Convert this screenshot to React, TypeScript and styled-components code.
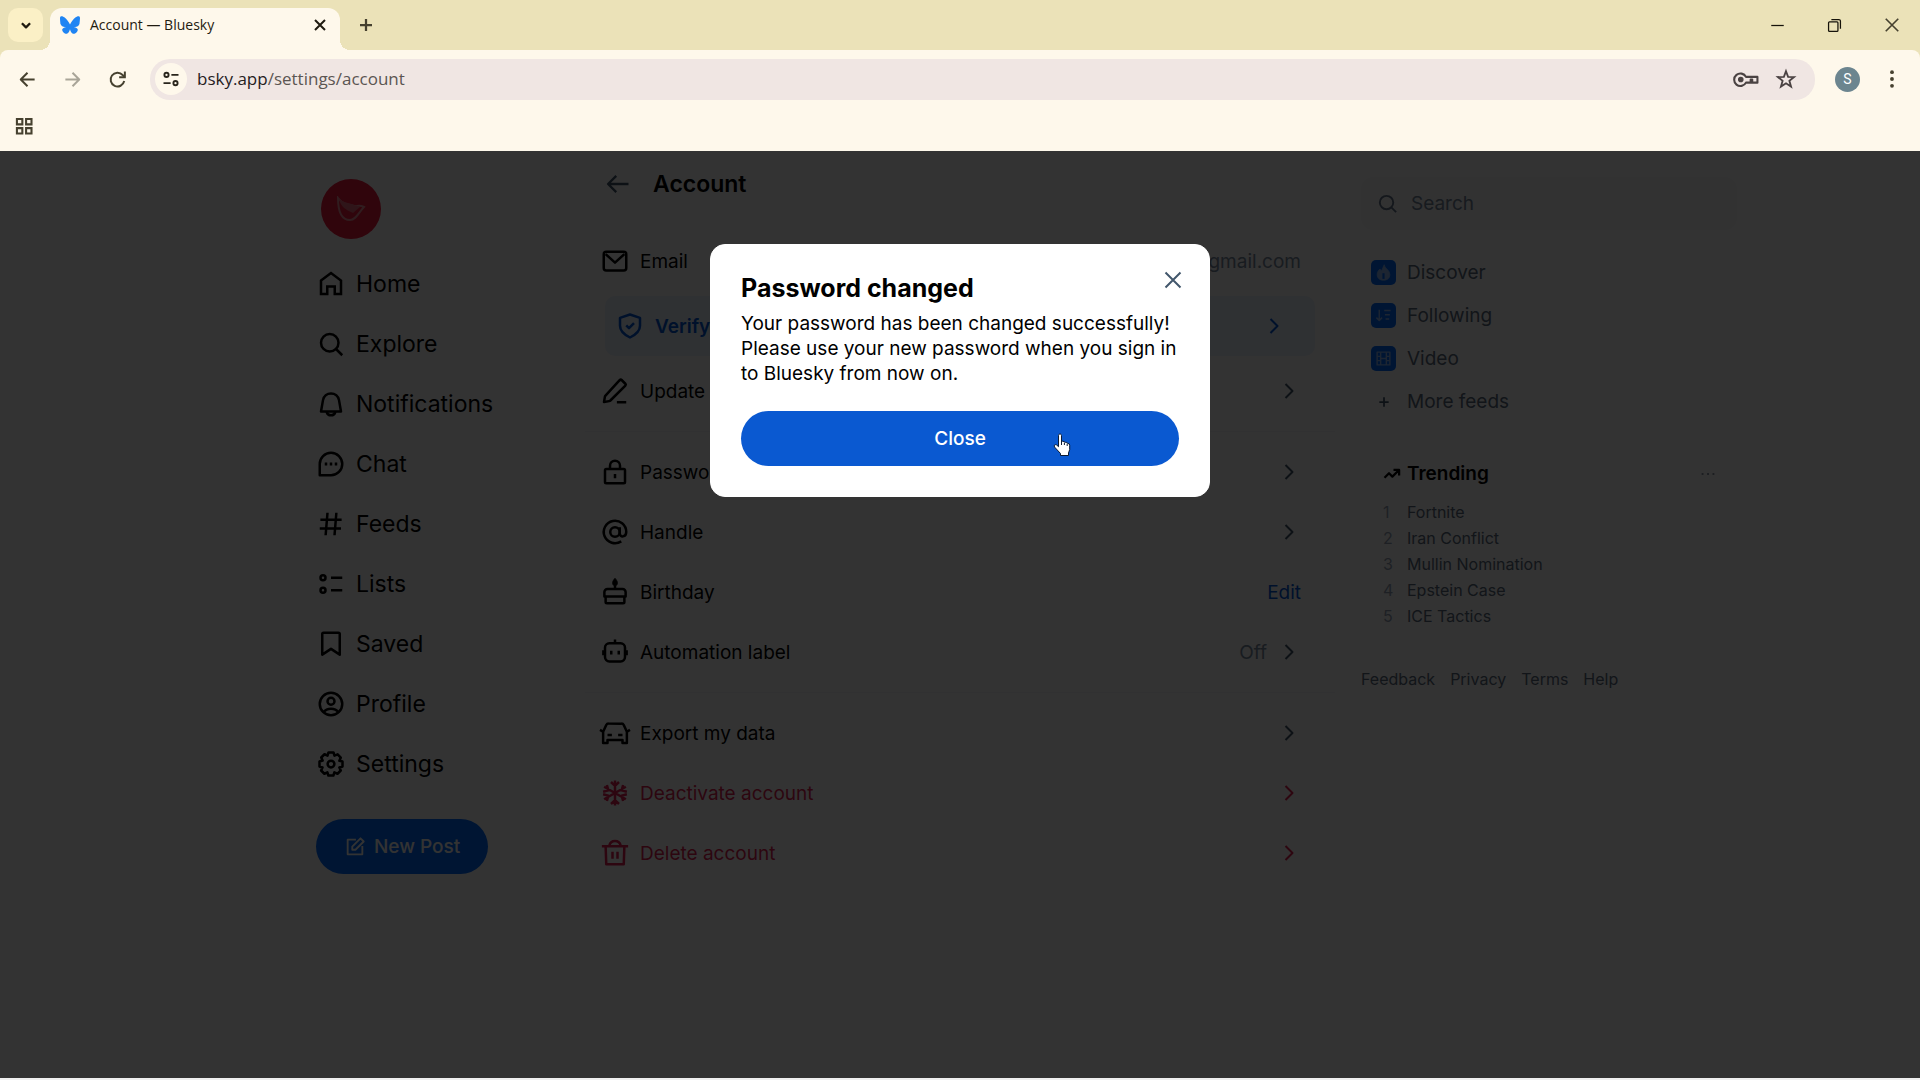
import React from 'react';
import styled, { createGlobalStyle } from 'styled-components';

const GlobalStyle = createGlobalStyle`
  * { box-sizing: border-box; }
  body { margin: 0; background: #f0f0f0; }
  button, input { font: inherit; color: inherit; }
  button { border: 0; padding: 0; background: none; cursor: pointer; }
  a { color: inherit; text-decoration: none; }
  h1, h2, p, ul, ol { margin: 0; padding: 0; }
  ul, ol { list-style: none; }
  svg { display: block; flex: none; }
`;

/* ---------- icons ---------- */

type IconProps = { size?: number; weight?: number; color?: string; children: React.ReactNode };

const Icon = ({ size = 30, weight = 2, color = 'currentColor', children }: IconProps) => (
  <svg width={size} height={size} viewBox="0 0 24 24" fill="none" stroke={color} strokeWidth={weight}
    strokeLinejoin="round" overflow="visible" aria-hidden="true">
    {children}
  </svg>
);

const glyphs: Record<string, React.ReactNode> = {
  home: <path d="M4 9.2 12 3.2l8 6V20h-5v-6H9v6H4Z" strokeLinejoin="miter" />,
  search: <><circle cx="11" cy="11" r="7" /><path d="m16 16 5 5" /></>,
  bell: <><path d="M5.6 8.9a6.5 6.5 0 0 1 12.8 0L20 18H4Z" /><path d="M8.5 18.3a3.6 3.6 0 0 0 7 0" /></>,
  chat: <><path d="M12 3a9 9 0 1 1 0 18H3v-9a9 9 0 0 1 9-9Z" /><path d="M7 12h2M11 12h2M15 12h2" strokeWidth="2.4" /></>,
  hash: <path d="M9.2 3 7.7 21M16.3 3l-1.5 18M3.5 8.5h17M3 15.5h17" />,
  lists: <><circle cx="5.6" cy="7" r="2" /><circle cx="5.6" cy="17" r="2" /><path d="M12 7h9M12 17h9" /></>,
  bookmark: <path d="M5 4a1 1 0 0 1 1-1h12a1 1 0 0 1 1 1v16.5l-7-4.6-7 4.6Z" />,
  profile: <><circle cx="12" cy="12" r="9" /><circle cx="12" cy="9.8" r="2.8" /><path d="M6 18.4c2.8-3.6 9.200-3.600 12 0" /></>,
  settings: <><path d="M10 2.800h4l.8 2.500 2.500-1 2.500 2.600-1.100 2.500L21.200 10v4l-2.500.8 1.100 2.400-2.600 2.600-2.500-1.100-.8 2.500h-4l-.8-2.500-2.400 1.100-2.600-2.600 1.100-2.400L2.800 14v-4l2.500-.8-1.100-2.400 2.600-2.600 2.400 1.100Z" /><circle cx="12" cy="12" r="2.700" /></>,
  compose: <><path d="M13 4H4v16h16v-9" /><path d="M9 15v-3.500L18 2.500l3.500 3.500-9 9Z" /></>,
  back: <path d="M21 12H3.500M10.500 5l-7 7 7 7" />,
  mail: <><rect x="3" y="4.500" width="18" height="15" rx="2" /><path d="m4.500 6.500 7.500 6.800 7.500-6.800" /></>,
  shield: <><path d="M12 2.800 4 5.500v6.300c0 4.700 3.500 7.200 8 9.400 4.500-2.200 8-4.700 8-9.400V5.500Z" /><path d="m9 11.500 2.200 2.200 4-4" /></>,
  pencil: <><path d="m14.800 4.300 1.100-1.100a1 1 0 0 1 1.400 0l3 3a1 1 0 0 1 0 1.400L8.300 19.600a2 2 0 0 1-1 .5l-4.100.7.700-4.100a2 2 0 0 1 .5-1Z" /><path d="M13.500 21h7.500" /></>,
  lock: <><rect x="4" y="9.500" width="16" height="11.500" rx="1" /><path d="M8 9.500V7a4 4 0 0 1 8 0v2.500M12 13.500v3.500" /></>,
  at: <><circle cx="12" cy="12" r="3.800" /><path d="M15.800 8.200V13c0 3.800 5.200 3.200 5.200-1A9 9 0 1 0 17 19.500" /></>,
  cake: <><path d="M3.500 12a2.500 2.500 0 0 1 2.500-2.500h12a2.500 2.500 0 0 1 2.500 2.500v3.500H3.500Z" /><path d="M4.500 15.500V20a1 1 0 0 0 1 1h13a1 1 0 0 0 1-1v-4.500M12 9.500V6.500" /><path d="M12 1c3 3 2.200 6 0 6s-3-3 0-6Z" fill="currentColor" strokeWidth="0.600" /></>,
  bot: <><rect x="4" y="5" width="16" height="14.500" rx="3.500" /><path d="M12 2v3M2.700 10.500v4M21.300 10.500v4M9 11v3M15 11v3" /></>,
  car: <><path d="M2.500 11 5 5.600A2 2 0 0 1 6.800 4.500h10.400A2 2 0 0 1 19 5.600L21.500 11v9H18V17.500H6V20H2.500Z" /><path d="M0 9.500l2.500 1.500M24 9.500l-2.500 1.500M6 13.500h3.500M14.500 13.500H18" /></>,
  snow: <path d="M12 2v20M3.300 7l17.400 10M3.300 17 20.700 7M8.800 3.200 12 6.300l3.200-3.100M8.800 20.800l3.200-3.100 3.200 3.100M2.500 11l4.200-1.100L5.500 5.600M21.500 13l-4.200 1.100 1.200 4.300M2.500 13l4.200 1.100-1.200 4.300M21.500 11l-4.200-1.100 1.200-4.300" />,
  trash: <><path d="M4.500 6.500 5 21h14l.5-14.500M1.500 6.500h21M7.500 6a4.600 4.600 0 0 1 9 0M10 11v5.500M14 11v5.500" /></>,
  chevron: <path d="m8.500 5 7 7-7 7" />,
  close: <path d="m4.500 4.500 15 15M19.500 4.500l-15 15" />,
  plus: <path d="M12 4v16M4 12h16" />,
  trend: <path d="m2 17 6-6 4.500 4.500L21 7M14 6.500h7.500V14" />,
  dots: <path d="M3.500 12h2.500M10.800 12h2.500M18 12h2.500" />,
  chevronDown: <path d="m5 9 7 7 7-7" />,
  arrowLeft: <path d="M21 12H4M12 3.500 3.500 12l8.500 8.500" />,
  arrowRight: <path d="M3 12h17M12 3.500l8.500 8.500-8.500 8.500" />,
  reload: <><path d="M20.500 14A8.700 8.700 0 1 1 18.500 6.300L21 8.800" /><path d="M21.300 2v7.200h-7.200" strokeLinejoin="miter" /></>,
  tune: <><circle cx="6" cy="6.500" r="2.800" /><circle cx="18" cy="17.500" r="2.800" /><path d="M12.500 6.500H22M2 17.500h9.500" /></>,
  grid: <path d="M3.500 3.500h6.500v6.500H3.500ZM14.500 3.500h6.500v6.500h-6.500ZM3.500 14.500h6.500v6.500H3.500ZM14.500 14.500h6.500v6.500h-6.500Z" strokeLinejoin="miter" />,
  star: <path d="m12 3.500 2.300 6.100 6.500.3-5.100 4.100 1.800 6.300L12 16.700l-5.500 3.600L8.300 14 3.200 9.900l6.500-.3Z" strokeLinejoin="miter" />,
  key: <><path d="M11.500 9.500H22.500v5.500h-5v-3h-1.500v3h-4.500a6 6 0 1 1 0-5.500Z" /><circle cx="6.500" cy="12" r="1.700" fill="currentColor" /></>,
  minimise: <path d="M2 12h20" />,
  restore: <><rect x="2.500" y="6" width="15" height="15.500" rx="1.500" /><path d="M7 2.500h12a2.500 2.500 0 0 1 2.500 2.500v12" /></>,
  more: <g fill="currentColor" stroke="none"><circle cx="12" cy="3.800" r="2.300" /><circle cx="12" cy="12" r="2.300" /><circle cx="12" cy="20.200" r="2.300" /></g>,
};

const Butterfly = () => (
  <svg width="20" height="18" viewBox="0 0 568 501" fill="#1f84f3" aria-hidden="true">
    <path d="M123 33.700c65.200 49 135.300 148.200 161 201.400 25.700-53.200 95.800-152.400 161-201.400 47-35.300 123-62.600 123 24.300 0 17.300-10 145.700-15.800 166.500-20.300 72.500-94.200 91-160 79.800 115 19.600 144.200 84.400 81 149.200-120 123.100-172.400-30.900-185.900-70.300-2.500-7.300-3.600-10.700-3.600-7.800 0-2.900-1.200.5-3.600 7.800-13.500 39.400-66 193.400-185.900 70.300-63.200-64.800-33.900-129.600 81-149.200-65.800 11.200-139.700-7.300-160-79.800C10 203.700 0 75.300 0 58 0-28.900 76-1.600 123 33.700Z" />
  </svg>
);

const HandCursor = () => (
  <svg width="18" height="24" viewBox="0 0 18 24" aria-hidden="true">
    <path d="M5.500 2.500C5.500.5 8.500.5 8.500 2.500V9l1-.8 1.900.5.9.6 1.500.2.900.8 1.500.6.500 1.300v4.300L15.500 20v2.500h-8V20.500L1.500 14c-1-1.700.8-3 2.200-2l1.800 1.700Z" fill="#fff" stroke="#0b1a33" strokeWidth="1" />
    <path d="M8.500 9v3M11.400 9.500V12M14.200 10.500V13" stroke="#0b1a33" strokeWidth="1" />
  </svg>
);

/* ---------- browser frame ---------- */

const Window = styled.div`
  min-height: 100vh;
  display: flex;
  flex-direction: column;
  background: #ebe2b8;
  border-bottom: 2px solid #f0f0f0;
`;

const TabStrip = styled.div`
  height: 50px;
  display: flex;
  align-items: flex-end;
  padding-left: 8px;
  color: #1f1b10;
`;

const TabSearch = styled.button`
  width: 35px;
  height: 34px;
  margin: 0 7px 8px 0;
  border-radius: 10px;
  background: #fbf0c6;
  display: grid;
  place-items: center;
`;

const Tab = styled.div`
  position: relative;
  width: 290px;
  height: 42px;
  display: flex;
  align-items: center;
  gap: 10px;
  padding: 0 12px 8px 10px;
  border-radius: 12px 12px 0 0;
  background: #fef8eb;
  &::before, &::after {
    content: '';
    position: absolute;
    bottom: 0;
    width: 10px;
    height: 10px;
    background: radial-gradient(circle at 0 0, transparent 10px, #fef8eb 10px);
  }
  &::before { left: -10px; }
  &::after { right: -10px; transform: scaleX(-1); }
`;

const TabTitle = styled.span`
  flex: 1;
  font: 14px/20px 'Open Sans', 'Noto Sans', sans-serif;
`;

const ChromeButton = styled.button<{ $w?: number; $color?: string }>`
  width: ${p => p.$w ?? 30}px;
  height: 34px;
  display: grid;
  place-items: center;
  color: ${p => p.$color ?? '#46412f'};
`;

const NewTab = styled(ChromeButton)`
  margin: 0 auto 8px 11px;
`;

const WindowControls = styled.div`
  display: flex;
  align-items: center;
  height: 50px;
`;

const Toolbar = styled.div`
  height: 58px;
  display: flex;
  align-items: center;
  padding: 0 11px 0 12px;
  border-radius: 8px 8px 0 0;
  background: #fef8eb;
`;

const NavButtons = styled.div`
  display: flex;
  gap: 15px;
  margin-right: 18px;
`;

const AddressBar = styled.div`
  flex: 1;
  height: 41px;
  display: flex;
  align-items: center;
  padding: 0 14px 0 5px;
  border-radius: 20px;
  background: #f0e6e3;
  gap: 10px;
`;

const SiteInfo = styled.button`
  width: 32px;
  height: 32px;
  border-radius: 16px;
  background: #fef8eb;
  display: grid;
  place-items: center;
  color: #29251c;
`;

const Address = styled.div`
  flex: 1;
  font: 17px/24px 'Open Sans', 'Noto Sans', sans-serif;
  color: #5b5552;
  b { font-weight: 400; color: #25201d; }
`;

const Avatar = styled.button`
  width: 25px;
  height: 25px;
  margin: 0 15px 0 20px;
  border-radius: 50%;
  background: #6c858f;
  color: #fff;
  font: 14px/25px Roboto, sans-serif;
`;

const Bookmarks = styled.div`
  height: 43px;
  display: flex;
  align-items: center;
  padding: 0 9px 8px;
  background: #fef8eb;
`;

/* ---------- page ---------- */

const Page = styled.div`
  position: relative;
  flex: 1;
  display: grid;
  grid-template-columns: 1fr 750px 1fr;
  background: #fff;
  color: #000;
  font-family: Inter, 'Liberation Sans', sans-serif;
  font-size: 19px;
  line-height: 25px;
`;

const Sidebar = styled.nav`
  justify-self: end;
  width: 269px;
  padding-top: 28px;
`;

const ProfilePicture = styled.div`
  width: 60px;
  height: 60px;
  margin: 0 0 15px 5px;
  border-radius: 50%;
  background: #f01a3c;
  display: grid;
  place-items: center;
`;

const NavLink = styled.a`
  height: 60px;
  display: flex;
  align-items: center;
  gap: 10px;
  font-size: 23px;
  line-height: 30px;
`;

const NewPost = styled.button`
  height: 55px;
  margin-top: 25px;
  padding: 0 28px;
  border-radius: 28px;
  background: #006aff;
  color: #fff;
  display: flex;
  align-items: center;
  gap: 8px;
  font-weight: 500;
`;

const MainHeader = styled.header`
  height: 65px;
  display: flex;
  align-items: center;
  gap: 20px;
  padding: 0 18px;
  margin-bottom: 15px;
`;

const IconButton = styled.button`
  display: grid;
  place-items: center;
  width: 30px;
  height: 30px;
  color: #42576c;
`;

const PageTitle = styled.h1`
  font-size: 23px;
  line-height: 30px;
  font-weight: 600;
`;

const tones = { normal: '#000', danger: '#e01f52', primary: '#0057d8' };

const Row = styled.a<{ $tone: keyof typeof tones; $card?: boolean }>`
  height: 60px;
  display: flex;
  align-items: center;
  gap: 10px;
  margin: ${p => (p.$card ? '5px 20px' : '0')};
  padding: ${p => (p.$card ? '0 29px 0 10px' : '0 34px 0 15px')};
  border-radius: ${p => (p.$card ? '10px' : '0')};
  background: ${p => (p.$card ? '#ecf3fd' : 'none')};
  color: ${p => tones[p.$tone]};
  font-weight: ${p => (p.$card ? 600 : 400)};
`;

const RowLabel = styled.span`
  flex: 1;
`;

const RowValue = styled.span<{ $link?: boolean }>`
  color: ${p => (p.$link ? '#0057d8' : '#7b8ba0')};
`;

const Chevron = styled.span<{ $tone: keyof typeof tones }>`
  color: ${p => (p.$tone === 'normal' ? '#42576c' : 'inherit')};
`;

const Divider = styled.hr`
  height: 1px;
  margin: 10px 0;
  border: 0;
  background: #f2f4f7;
`;

const Aside = styled.aside`
  width: 402px;
  padding: 26px 0 0 26px;
`;

const SearchBox = styled.label`
  height: 53px;
  display: flex;
  align-items: center;
  gap: 12px;
  padding: 0 15px;
  border-radius: 12px;
  background: #f8fafb;
  color: #66768a;
  input {
    min-width: 0;
    flex: 1;
    border: 0;
    padding: 0;
    outline: 0;
    background: none;
  }
  input::placeholder { color: #76859a; opacity: 1; }
`;

const FeedList = styled.ul`
  display: flex;
  flex-direction: column;
  gap: 18px;
  padding: 30px 10px;
`;

const FeedLink = styled.a`
  display: flex;
  align-items: center;
  gap: 11px;
  color: #5a6a7d;
`;

const FeedIcon = styled.span<{ $plain?: boolean }>`
  width: 25px;
  height: 25px;
  border-radius: 5px;
  display: grid;
  place-items: center;
  background: ${p => (p.$plain ? 'none' : '#006aff')};
  color: ${p => (p.$plain ? '#42576c' : '#8fb9f5')};
`;

const Trending = styled.section`
  padding: 17px 20px 20px 22px;
`;

const TrendingHeader = styled.div`
  display: flex;
  align-items: center;
  gap: 6px;
  margin-bottom: 12px;
  h2 { flex: 1; font-size: 19px; line-height: 26px; font-weight: 600; }
`;

const Topic = styled.a`
  display: grid;
  grid-template-columns: 24px 1fr;
  font-size: 16px;
  line-height: 26px;
  color: #5a6a7d;
  span { color: #94a2b5; }
`;

const FooterLinks = styled.footer`
  display: flex;
  gap: 15px;
  padding-top: 18px;
  font-size: 16px;
  line-height: 24px;
  color: #5a6a7d;
`;

/* ---------- dialog ---------- */

const Backdrop = styled.div`
  position: absolute;
  inset: 0;
  padding-top: 93px;
  display: flex;
  justify-content: center;
  align-items: flex-start;
  background: rgba(0, 0, 0, 0.8);
`;

const Dialog = styled.section`
  position: relative;
  width: 500px;
  padding: 29px 30px 30px;
  border: 1px solid #fff;
  border-radius: 15px;
  background: #fff;
  h2 { font-size: 25px; line-height: 29px; font-weight: 700; margin-bottom: 8px; }
`;

const DialogClose = styled(IconButton)`
  position: absolute;
  top: 20px;
  right: 21px;
`;

const ConfirmButton = styled.button`
  width: 100%;
  height: 55px;
  margin-top: 25px;
  border-radius: 28px;
  background: #0a59d1;
  color: #fff;
  font-weight: 500;
`;

const Pointer = styled.span`
  position: absolute;
  left: 342px;
  top: 188px;
  pointer-events: none;
`;

const navItems = [
  ['home', 'Home'], ['search', 'Explore'], ['bell', 'Notifications'], ['chat', 'Chat'], ['hash', 'Feeds'],
  ['lists', 'Lists'], ['bookmark', 'Saved'], ['profile', 'Profile'], ['settings', 'Settings'],
];

const topics = ['Fortnite', 'Iran Conflict', 'Mullin Nomination', 'Epstein Case', 'ICE Tactics'];

type SettingProps = {
  icon: string; label: string; tone?: keyof typeof tones; value?: string;
  link?: boolean; arrow?: boolean; card?: boolean;
};

const Setting = ({ icon, label, tone = 'normal', value, link, arrow = true, card }: SettingProps) => (
  <Row href="#" $tone={tone} $card={card}>
    <Icon>{glyphs[icon]}</Icon>
    <RowLabel>{label}</RowLabel>
    {value && <RowValue $link={link}>{value}</RowValue>}
    {arrow && <Chevron $tone={tone}><Icon size={24}>{glyphs.chevron}</Icon></Chevron>}
  </Row>
);

export default function App() {
  return (
    <Window>
      <GlobalStyle />
      <TabStrip>
        <TabSearch aria-label="Search tabs"><Icon size={14} weight={4}>{glyphs.chevronDown}</Icon></TabSearch>
        <Tab>
          <Butterfly />
          <TabTitle>Account — Bluesky</TabTitle>
          <button aria-label="Close tab"><Icon size={16} weight={3}>{glyphs.close}</Icon></button>
        </Tab>
        <NewTab aria-label="New tab"><Icon size={18} weight={3}>{glyphs.plus}</Icon></NewTab>
        <WindowControls>
          <ChromeButton $w={57} $color="#16130a" aria-label="Minimise"><Icon size={15}>{glyphs.minimise}</Icon></ChromeButton>
          <ChromeButton $w={57} $color="#16130a" aria-label="Restore"><Icon size={15}>{glyphs.restore}</Icon></ChromeButton>
          <ChromeButton $w={57} aria-label="Close window"><Icon size={20}>{glyphs.close}</Icon></ChromeButton>
        </WindowControls>
      </TabStrip>
      <Toolbar>
        <NavButtons>
          <ChromeButton aria-label="Back"><Icon size={19} weight={2.5}>{glyphs.arrowLeft}</Icon></ChromeButton>
          <ChromeButton $color="#a9a598" aria-label="Forward"><Icon size={19} weight={2.5}>{glyphs.arrowRight}</Icon></ChromeButton>
          <ChromeButton aria-label="Reload"><Icon size={19} weight={2.5}>{glyphs.reload}</Icon></ChromeButton>
        </NavButtons>
        <AddressBar>
          <SiteInfo aria-label="Site information"><Icon size={18} weight={2.5}>{glyphs.tune}</Icon></SiteInfo>
          <Address><b>bsky.app</b>/settings/account</Address>
          <ChromeButton $color="#4a4242" aria-label="Passwords"><Icon size={25}>{glyphs.key}</Icon></ChromeButton>
          <ChromeButton $color="#4a4242" aria-label="Bookmark"><Icon size={22}>{glyphs.star}</Icon></ChromeButton>
        </AddressBar>
        <Avatar aria-label="Browser profile">S</Avatar>
        <ChromeButton $w={34} aria-label="Browser menu"><Icon size={20}>{glyphs.more}</Icon></ChromeButton>
      </Toolbar>
      <Bookmarks>
        <ChromeButton aria-label="Tab groups"><Icon size={20} weight={2.5}>{glyphs.grid}</Icon></ChromeButton>
      </Bookmarks>

      <Page>
        <Sidebar>
          <ProfilePicture>
            <svg width="30" height="26" viewBox="0 0 30 26" fill="#e86a7c" stroke="#f0909c" strokeWidth="2" aria-hidden="true">
              <path d="M2 2c0 14 4 22 12 22 6 0 9-8 14-13-6-3-7 0-9-1C13 9 6 8 2 2Z" fill="none" />
              <path d="M3 3c5 4 11 4 15 6l6 2-7 6C10 14 5 11 3 3Z" stroke="none" />
            </svg>
          </ProfilePicture>
          {navItems.map(([icon, label]) => (
            <NavLink href="#" key={label}><Icon>{glyphs[icon]}</Icon>{label}</NavLink>
          ))}
          <NewPost><Icon size={22}>{glyphs.compose}</Icon>New Post</NewPost>
        </Sidebar>

        <main>
          <MainHeader>
            <IconButton aria-label="Go back"><Icon size={28}>{glyphs.back}</Icon></IconButton>
            <PageTitle>Account</PageTitle>
          </MainHeader>
          <Setting icon="mail" label="Email" value="@gmail.com" arrow={false} />
          <Setting icon="shield" label="Verify your email" tone="primary" card />
          <Setting icon="pencil" label="Update email" />
          <Divider />
          <Setting icon="lock" label="Password" />
          <Setting icon="at" label="Handle" />
          <Setting icon="cake" label="Birthday" value="Edit" link arrow={false} />
          <Setting icon="bot" label="Automation label" value="Off" />
          <Divider />
          <Setting icon="car" label="Export my data" />
          <Setting icon="snow" label="Deactivate account" tone="danger" />
          <Setting icon="trash" label="Delete account" tone="danger" />
        </main>

        <Aside>
          <SearchBox>
            <Icon size={23}>{glyphs.search}</Icon>
            <input type="text" placeholder="Search" aria-label="Search" />
          </SearchBox>
          <FeedList>
            <li><FeedLink href="#"><FeedIcon>
              <Icon size={17} weight={1}><path d="M13 1c0 5 8 7 8 14 0 5-4 8-9 8s-9-3-9-8c0-4 2-6 4-8l2 3c2-3 2-6 4-9Z" fill="currentColor" /><path d="M12 13v8" stroke="#006aff" strokeWidth="3" /></Icon>
            </FeedIcon>Discover</FeedLink></li>
            <li><FeedLink href="#"><FeedIcon>
              <Icon size={17}><path d="M6 4v15M2 15l4 4 4-4M13 5h9M14 11h7M15 17h5" /></Icon>
            </FeedIcon>Following</FeedLink></li>
            <li><FeedLink href="#"><FeedIcon>
              <Icon size={17}><rect x="3" y="3" width="18" height="18" /><path d="M8 3v18M16 3v18M3 9h5M3 15h5M16 9h5M16 15h5M8 12h8" /></Icon>
            </FeedIcon>Video</FeedLink></li>
            <li><FeedLink href="#"><FeedIcon $plain><Icon size={14} weight={3}>{glyphs.plus}</Icon></FeedIcon>More feeds</FeedLink></li>
          </FeedList>
          <Trending>
            <TrendingHeader>
              <Icon size={18} weight={3}>{glyphs.trend}</Icon>
              <h2>Trending</h2>
              <button aria-label="Trending options"><Icon size={18} color="#66768a">{glyphs.dots}</Icon></button>
            </TrendingHeader>
            <ol>
              {topics.map((topic, i) => <li key={topic}><Topic href="#"><span>{i + 1}</span>{topic}</Topic></li>)}
            </ol>
          </Trending>
          <FooterLinks>
            <a href="#">Feedback</a><a href="#">Privacy</a><a href="#">Terms</a><a href="#">Help</a>
          </FooterLinks>
        </Aside>

        <Backdrop>
          <Dialog role="dialog" aria-modal="true" aria-labelledby="dialog-title">
            <h2 id="dialog-title">Password changed</h2>
            <p>Your password has been changed successfully! Please use your new password when you sign in to Bluesky from now on.</p>
            <ConfirmButton>Close</ConfirmButton>
            <DialogClose aria-label="Close dialog"><Icon size={24}>{glyphs.close}</Icon></DialogClose>
            <Pointer><HandCursor /></Pointer>
          </Dialog>
        </Backdrop>
      </Page>
    </Window>
  );
}
